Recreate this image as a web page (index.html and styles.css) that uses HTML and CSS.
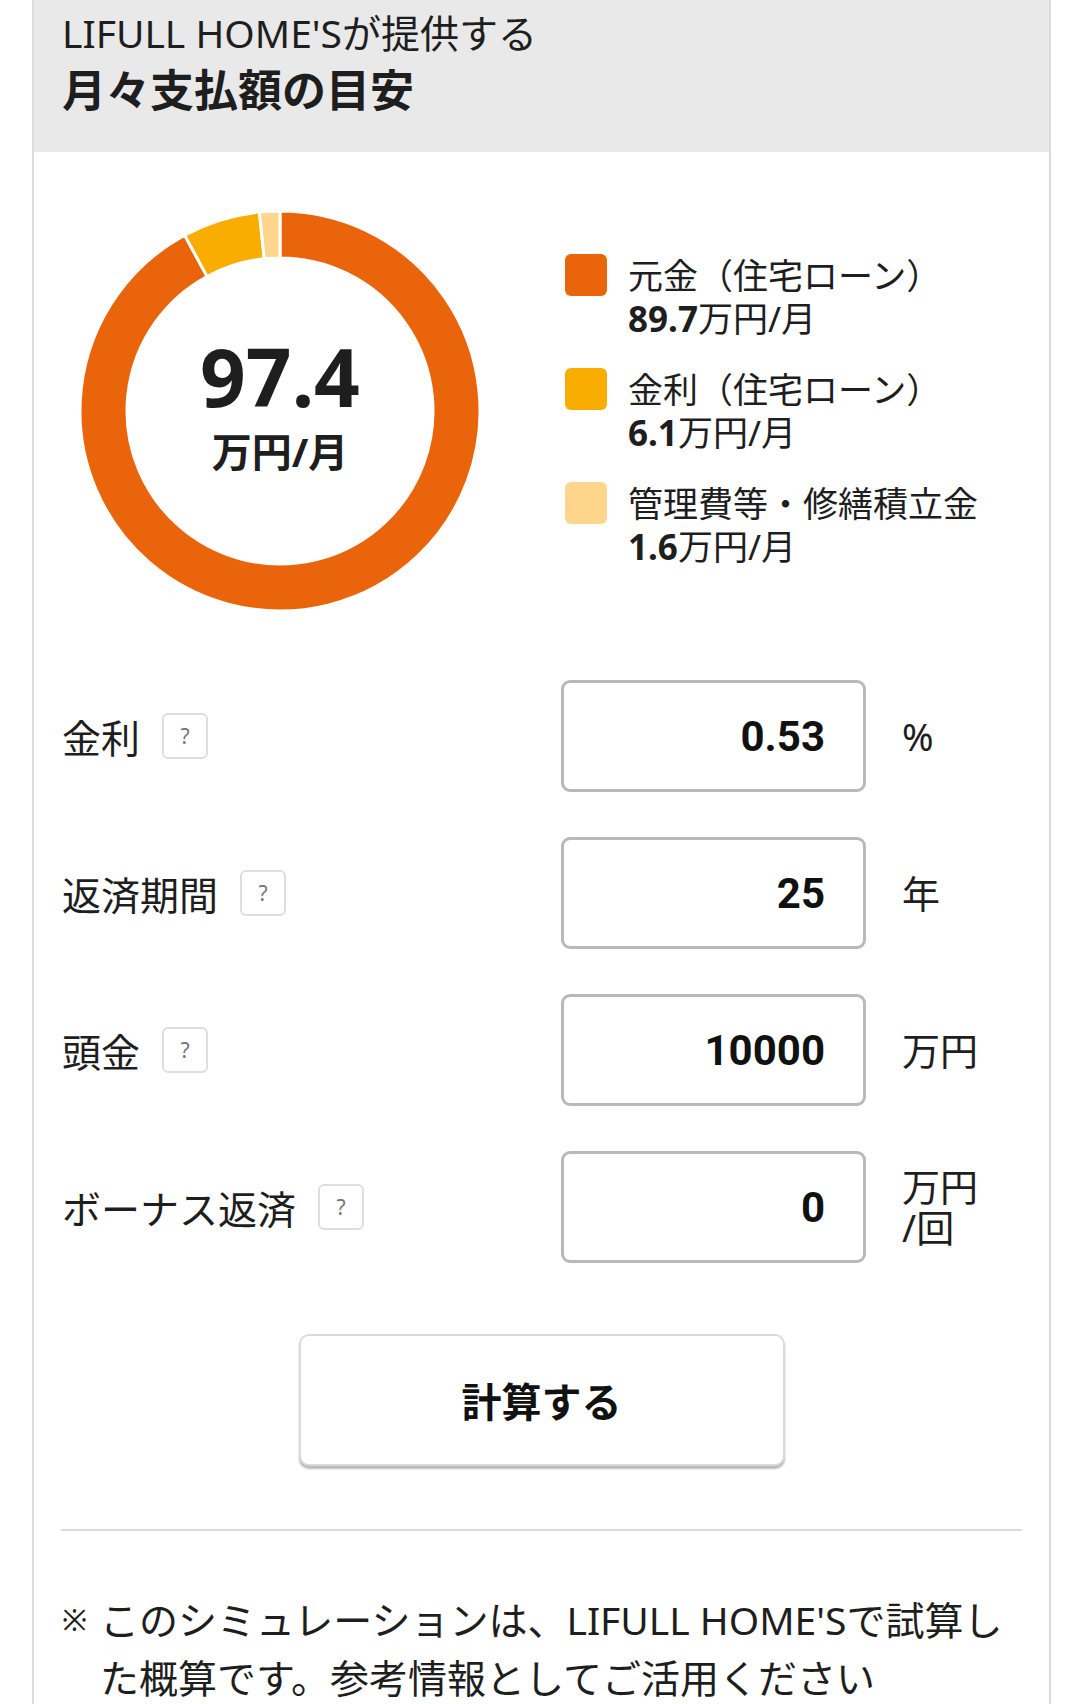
FILE: index.html
```html
<!DOCTYPE html>
<html lang="ja">

<head>
    <meta charset="UTF-8">
    <meta name="viewport" content="width=device-width, initial-scale=1.0">
    <title>月々支払額の目安</title>
    <link rel="stylesheet" href="styles.css">
</head>

<body>
    <div class="card">
        <div class="cardHead">
            <p class="subTitle">LIFULL HOME'Sが提供する</p>
            <h2 class="title">月々支払額の目安</h2>
        </div>

        <div class="chartZone">
            <div class="donut">
                <svg width="404" height="404" viewBox="-2 -2 404 404">
                    <path class="seg1" d="M200 0 A200 200 0 1 1 104.68 24.18 L127.08 65.50 A153 153 0 1 0 200 47 Z" />
                    <path class="seg2" d="M104.68 24.18 A200 200 0 0 1 179.41 1.06 L184.25 47.81 A153 153 0 0 0 127.08 65.50 Z" />
                    <path class="seg3" d="M179.41 1.06 A200 200 0 0 1 200 0 L200 47 A153 153 0 0 0 184.25 47.81 Z" />
                </svg>
                <div class="donutText">
                    <div class="total">97.4</div>
                    <div class="totalUnit">万円/月</div>
                </div>
            </div>
            <ul class="legend">
                <li>
                    <span class="chip chip1"></span>
                    <div>
                        <div>元金（住宅ローン）</div>
                        <div><b>89.7</b>万円/月</div>
                    </div>
                </li>
                <li>
                    <span class="chip chip2"></span>
                    <div>
                        <div>金利（住宅ローン）</div>
                        <div><b>6.1</b>万円/月</div>
                    </div>
                </li>
                <li>
                    <span class="chip chip3"></span>
                    <div>
                        <div>管理費等・修繕積立金</div>
                        <div><b>1.6</b>万円/月</div>
                    </div>
                </li>
            </ul>
        </div>

        <div class="form">
            <div class="row">
                <div class="label">金利<span class="help">?</span></div>
                <input class="field" type="text" value="0.53">
                <div class="unit">%</div>
            </div>
            <div class="row">
                <div class="label">返済期間<span class="help">?</span></div>
                <input class="field" type="text" value="25">
                <div class="unit">年</div>
            </div>
            <div class="row">
                <div class="label">頭金<span class="help">?</span></div>
                <input class="field" type="text" value="10000">
                <div class="unit">万円</div>
            </div>
            <div class="row">
                <div class="label">ボーナス返済<span class="help">?</span></div>
                <input class="field" type="text" value="0">
                <div class="unit">万円<br>/回</div>
            </div>
        </div>

        <div class="btnZone">
            <button class="calcBtn">計算する</button>
        </div>

        <hr class="line">

        <div class="note">
            <span class="mark">※</span>
            <p>このシミュレーションは、LIFULL HOME'Sで試算した概算です。参考情報としてご活用ください</p>
        </div>
    </div>
</body>

</html>
```

FILE: styles.css
```css
body {
    margin: 0;
    background-color: #fff;
    color: #1e1e1e;
    font-family: "Noto Sans", "Noto Sans CJK JP", sans-serif;
}

.card {
    margin-left: 32px;
    width: 1019px;
    box-sizing: border-box;
    border-left: 2px solid #dcdcdc;
    border-right: 2px solid #dcdcdc;
}

.cardHead {
    background-color: #e9e9e9;
    height: 152px;
    box-sizing: border-box;
    padding: 8px 28px 0;
}

.subTitle {
    margin: 0;
    font-size: 39px;
    line-height: 50px;
}

.title {
    margin: 4px 0 0;
    font-size: 44px;
    line-height: 56px;
    font-weight: bold;
}

/* chart */

.chartZone {
    display: flex;
    align-items: center;
    padding: 57px 0 0 44px;
}

.donut {
    display: grid;
    width: 404px;
    height: 404px;
}

.donut svg,
.donutText {
    grid-area: 1 / 1;
}

.donut path {
    stroke: #fff;
    stroke-width: 3;
}

.seg1 {
    fill: #e9640b;
}

.seg2 {
    fill: #f9ad00;
}

.seg3 {
    fill: #fdd68c;
}

.donutText {
    display: flex;
    flex-direction: column;
    align-items: center;
    justify-content: center;
    font-weight: bold;
    padding-bottom: 10px;
}

.total {
    font-size: 80px;
    line-height: 80px;
}

.totalUnit {
    font-size: 40px;
    line-height: 48px;
    margin-top: 12px;
}

.legend {
    list-style: none;
    margin: 0 0 0 83px;
    padding: 0;
    font-size: 35px;
    line-height: 43px;
}

.legend li {
    display: flex;
    margin-bottom: 28px;
}

.legend li:last-child {
    margin-bottom: 0;
}

.chip {
    width: 42px;
    height: 42px;
    border-radius: 6px;
    margin-right: 21px;
    flex-shrink: 0;
}

.chip1 {
    background-color: #e9640b;
}

.chip2 {
    background-color: #f9ad00;
}

.chip3 {
    background-color: #fdd68c;
}

/* form */

.form {
    margin-top: 67px;
}

.row {
    display: flex;
    align-items: center;
    padding: 0 67px 0 28px;
    margin-bottom: 45px;
}

.row:last-child {
    margin-bottom: 0;
}

.label {
    flex: 1;
    display: flex;
    align-items: center;
    font-size: 39px;
}

.help {
    display: inline-flex;
    align-items: center;
    justify-content: center;
    width: 46px;
    height: 46px;
    box-sizing: border-box;
    margin-left: 22px;
    border: 2px solid #dedede;
    border-radius: 6px;
    color: #777;
    font-size: 21px;
}

.field {
    width: 305px;
    height: 112px;
    box-sizing: border-box;
    margin: 0;
    border: 3px solid #b9b9b9;
    border-radius: 9px;
    padding: 0 38px 0 10px;
    text-align: right;
    font-family: Roboto, "Liberation Sans", sans-serif;
    font-size: 42px;
    font-weight: bold;
    color: #111;
    background: #fff;
}

.unit {
    width: 80px;
    margin-left: 36px;
    font-size: 38px;
    line-height: 41px;
}

/* button */

.btnZone {
    display: flex;
    justify-content: center;
    margin-top: 71px;
}

.calcBtn {
    width: 486px;
    height: 132px;
    border: 2px solid #dadada;
    border-radius: 10px;
    background-color: #fff;
    box-shadow: 0 3px 2px rgba(0, 0, 0, 0.28);
    font-family: "Noto Sans", "Noto Sans CJK JP", sans-serif;
    font-size: 40px;
    font-weight: bold;
    color: #111;
}

.line {
    margin: 63px 27px 0;
    border: 0;
    border-top: 2px solid #dcdcdc;
}

.note {
    display: flex;
    padding: 60px 34px 0 28px;
    font-size: 39px;
    line-height: 58px;
}

.mark {
    width: 38px;
    flex-shrink: 0;
    font-size: 30px;
}

.note p {
    margin: 0;
}
```
